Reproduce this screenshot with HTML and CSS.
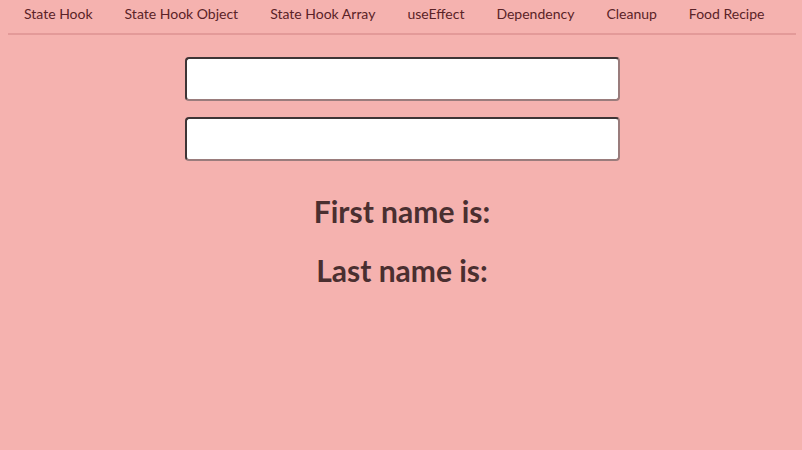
FILE: index.html
```html
<!DOCTYPE html>
<html lang="en">
<head>
<meta charset="utf-8">
<title>Hooks</title>
<link rel="stylesheet" href="styles.css">
</head>
<body>
<nav class="nav">
  <a class="nav-link" href="#">State Hook</a>
  <a class="nav-link" href="#">State Hook Object</a>
  <a class="nav-link" href="#">State Hook Array</a>
  <a class="nav-link" href="#">useEffect</a>
  <a class="nav-link" href="#">Dependency</a>
  <a class="nav-link" href="#">Cleanup</a>
  <a class="nav-link" href="#">Food Recipe</a>
</nav>
<main class="content">
  <form class="form">
    <input class="field" type="text">
    <input class="field" type="text">
  </form>
  <h2 class="name">First name is:</h2>
  <h2 class="name">Last name is:</h2>
</main>
</body>
</html>
```
FILE: styles.css
```css
html, body {
  margin: 0;
  padding: 0;
  background: #f5b2af;
  font-family: "Lato", "Liberation Sans", sans-serif;
}
body {
  padding: 0 6px 0 8px;
  min-height: 450px;
  box-sizing: border-box;
}
.nav {
  display: flex;
  height: 35px;
  align-items: center;
  padding-bottom: 7px;
  box-sizing: border-box;
  border-bottom: 2px solid #e39a99;
}
.nav-link {
  padding: 0 16px;
  font-size: 14px;
  color: #5a2227;
  text-decoration: none;
  white-space: nowrap;
}
.content {
  display: flex;
  flex-direction: column;
  align-items: center;
}
.form {
  display: flex;
  flex-direction: column;
  gap: 16px;
  margin-top: 22px;
}
.field {
  width: 435px;
  height: 44px;
  box-sizing: border-box;
  background: #fff;
  border: 2px solid;
  border-top-color: #3e3536;
  border-left-color: #3e3536;
  border-right-color: #9a7c7c;
  border-bottom-color: #9a7c7c;
  border-radius: 4px;
  font-family: inherit;
  font-size: 16px;
}
.name {
  margin: 0;
  font-size: 30px;
  font-weight: 700;
  color: #4a2f30;
  line-height: 36px;
}
.name:first-of-type {
  margin-top: 32px;
}
.name + .name {
  margin-top: 23px;
}
```
